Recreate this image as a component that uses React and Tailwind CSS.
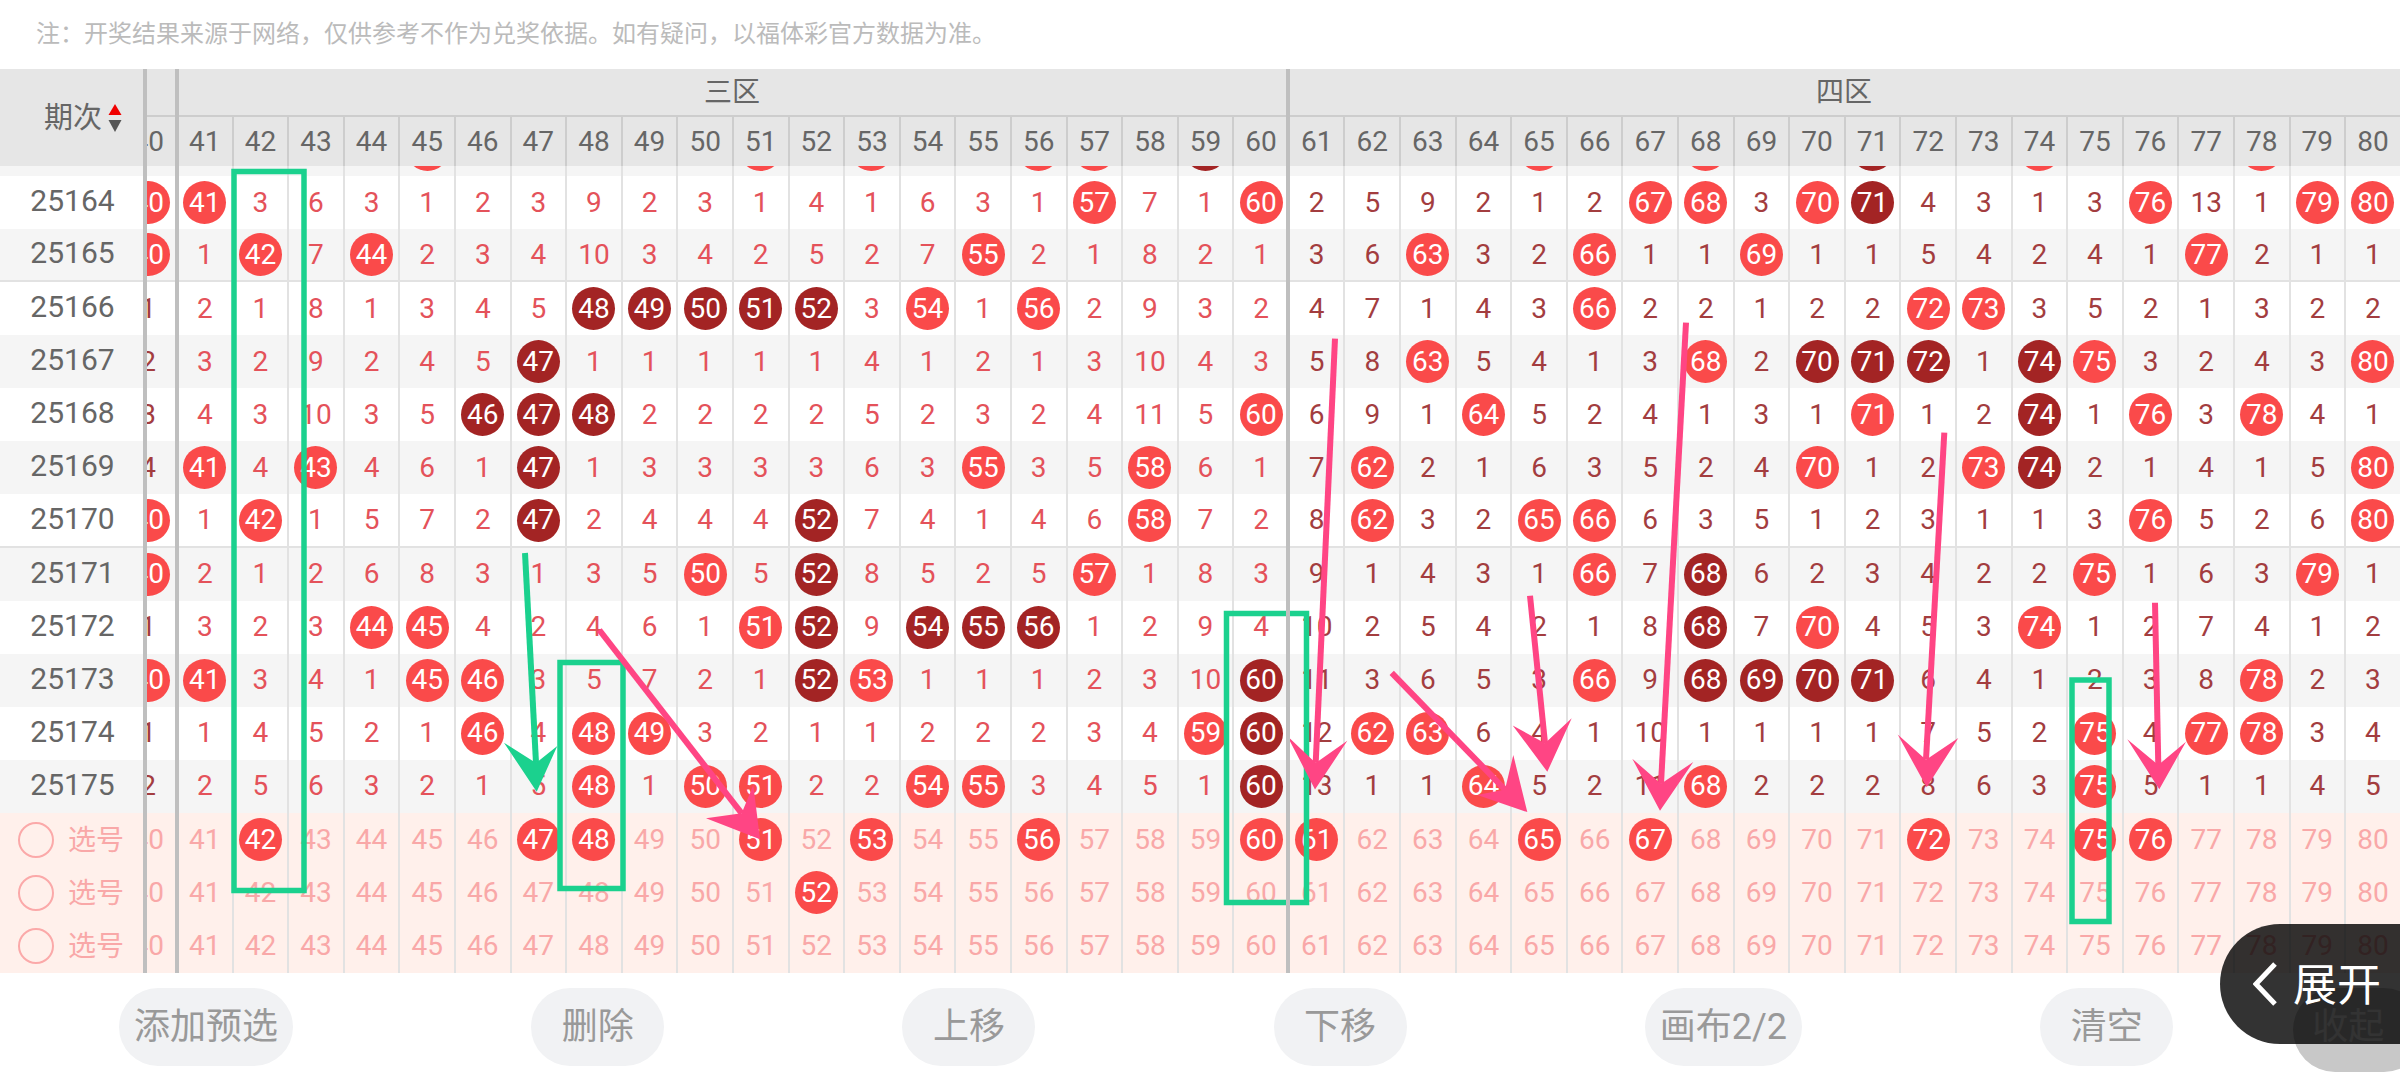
const ZONE3 = Array.from({ length: 20 }, (_, i) => 41 + i);
const ZONE4 = Array.from({ length: 20 }, (_, i) => 61 + i);
const COLS = [...ZONE3, ...ZONE4];

// one token per column 40..80: "." red ball, "*" dark ball, otherwise the miss count
const ROWS = [
  ['25163', '1 1 1 1 1 . 1 1 1 1 1 . 1 . 1 1 . . 1 * 1 1 1 1 1 . 1 1 . 1 1 * 1 1 . 1 1 1 . 1 1', false],
  ['25164', '. . 3 6 3 1 2 3 9 2 3 1 4 1 6 3 1 . 7 1 . 2 5 9 2 1 2 . . 3 . * 4 3 1 3 . 13 1 . .', false],
  ['25165', '. 1 . 7 . 2 3 4 10 3 4 2 5 2 7 . 2 1 8 2 1 3 6 . 3 2 . 1 1 . 1 1 5 4 2 4 1 . 2 1 1', true],
  ['25166', '1 2 1 8 1 3 4 5 * * * * * 3 . 1 . 2 9 3 2 4 7 1 4 3 . 2 2 1 2 2 . . 3 5 2 1 3 2 2', false],
  ['25167', '2 3 2 9 2 4 5 * 1 1 1 1 1 4 1 2 1 3 10 4 3 5 8 . 5 4 1 3 . 2 * * * 1 * . 3 2 4 3 .', false],
  ['25168', '3 4 3 10 3 5 * * * 2 2 2 2 5 2 3 2 4 11 5 . 6 9 1 . 5 2 4 1 3 1 . 1 2 * 1 . 3 . 4 1', false],
  ['25169', '4 . 4 . 4 6 1 * 1 3 3 3 3 6 3 . 3 5 . 6 1 7 . 2 1 6 3 5 2 4 . 1 2 . * 2 1 4 1 5 .', false],
  ['25170', '. 1 . 1 5 7 2 * 2 4 4 4 * 7 4 1 4 6 . 7 2 8 . 3 2 . . 6 3 5 1 2 3 1 1 3 . 5 2 6 .', true],
  ['25171', '. 2 1 2 6 8 3 1 3 5 . 5 * 8 5 2 5 . 1 8 3 9 1 4 3 1 . 7 * 6 2 3 4 2 2 . 1 6 3 . 1', false],
  ['25172', '1 3 2 3 . . 4 2 4 6 1 . * 9 * * * 1 2 9 4 10 2 5 4 2 1 8 * 7 . 4 5 3 . 1 2 7 4 1 2', false],
  ['25173', '. . 3 4 1 . . 3 5 7 2 1 * . 1 1 1 2 3 10 * 11 3 6 5 3 . 9 * * * * 6 4 1 2 3 8 . 2 3', false],
  ['25174', '1 1 4 5 2 1 . 4 . . 3 2 1 1 2 2 2 3 4 . * 12 . . 6 4 1 10 1 1 1 1 7 5 2 . 4 . . 3 4', false],
  ['25175', '2 2 5 6 3 2 1 5 . 1 . . 2 2 . . 3 4 5 1 * 13 1 1 . 5 2 11 . 2 2 2 8 6 3 . 5 1 1 4 5', false],
];

const PICKS = [[42, 47, 48, 51, 53, 56, 60, 61, 65, 67, 72, 75, 76], [52], []];
const BUTTONS = ['添加预选', '删除', '上移', '下移', '画布2/2', '清空'];

function Ball({ n, dark }) {
  return (
    <span className={`flex h-[43px] w-[43px] shrink-0 items-center justify-center rounded-full text-white ${dark ? 'bg-[#a32424]' : 'bg-[#fa4a4a]'}`}>
      {n}
    </span>
  );
}

function Mark({ token, col }) {
  if (token === '.') return <Ball n={col} />;
  if (token === '*') return <Ball n={col} dark />;
  return <span className={col > 40 && col <= 60 ? 'text-[#e4525a]' : 'text-[#a33d3f]'}>{token}</span>;
}

function Cell({ children }) {
  return (
    <div className="flex h-full w-[55.6px] shrink-0 items-center justify-center border-l-2 border-[#e2e2e2]">
      {children}
    </div>
  );
}

// column 40 is scrolled under the frozen side, only its right end shows
function ClippedCell({ children }) {
  return (
    <div className="flex h-full w-[31px] shrink-0 justify-end overflow-hidden">
      <div className="flex h-full w-[55.6px] shrink-0 items-center justify-center">{children}</div>
    </div>
  );
}

function HistoryRow({ issue, marks, line, index }) {
  const tokens = marks.split(' ');
  const stripe = index % 2 === 0 ? 'bg-[#f5f5f5]' : 'bg-white';
  return (
    <div className={`flex h-[53.08px] ${stripe} ${line ? 'border-b-2 border-[#e2e2e2]' : ''}`}>
      <div className="flex w-[145px] shrink-0 items-center justify-center pb-[3px] text-[30px] text-[#666]">{issue}</div>
      <ClippedCell>
        <Mark token={tokens[0]} col={40} />
      </ClippedCell>
      {COLS.map((col, i) => (
        <Cell key={col}>
          <Mark token={tokens[i + 1]} col={col} />
        </Cell>
      ))}
    </div>
  );
}

function PickRow({ picks }) {
  return (
    <div className="flex h-[53.33px] bg-[#fff0eb] text-[#f9a8a8]">
      <div className="flex w-[145px] shrink-0 items-center gap-[14px] pl-[18px]">
        <span className="h-[36px] w-[36px] rounded-full border-2 border-[#fba9a9]" />
        <span className="pt-[2px] text-[28px]">选号</span>
      </div>
      <ClippedCell>40</ClippedCell>
      {COLS.map((col) => (
        <Cell key={col}>{picks.includes(col) ? <Ball n={col} /> : col}</Cell>
      ))}
    </div>
  );
}

function Header() {
  return (
    <div className="flex h-[97px] bg-[#e6e6e6] text-[#666]">
      <div className="flex w-[145px] shrink-0 items-center gap-[6px] pl-[44px] pt-[1px]">
        <span className="text-[29px]">期次</span>
        <svg width="14" height="28" viewBox="0 0 14 28">
          <path d="M7 0 L13.5 11 L0.5 11 Z" fill="#f00000" />
          <path d="M0.5 16 L13.5 16 L7 28 Z" fill="#555" />
        </svg>
      </div>
      <div className="flex min-w-0 flex-1 flex-col">
        <div className="flex h-[48px] border-b-2 border-[#cdcdcd] pt-[1px]">
          <div className="w-[31px]" />
          <div className="flex w-[1112px] items-center justify-center text-[28px]">三区</div>
          <div className="flex w-[1112px] items-center justify-center text-[28px]">四区</div>
        </div>
        <div className="flex h-[49px]">
          <ClippedCell>40</ClippedCell>
          {COLS.map((col) => (
            <div key={col} className="flex h-full w-[55.6px] shrink-0 items-center justify-center border-l-2 border-[#cdcdcd]">
              {col}
            </div>
          ))}
        </div>
      </div>
    </div>
  );
}

function Arrow({ from, tip, wing1, notch, wing2, color }) {
  return (
    <g fill={color} stroke={color}>
      <line x1={from[0]} y1={from[1]} x2={notch[0]} y2={notch[1]} strokeWidth="6" />
      <polygon points={`${tip} ${wing1} ${notch} ${wing2}`} stroke="none" />
    </g>
  );
}

// hand drawn markup on top of the chart
function Markup() {
  const green = '#1bd18e';
  const pink = '#ff4584';
  return (
    <svg className="pointer-events-none absolute left-0 top-0" width="2400" height="1080" viewBox="0 0 2400 1080" fill="none">
      <rect x="234" y="171.500" width="70" height="719" stroke={green} strokeWidth="5.500" />
      <rect x="560" y="662.500" width="63" height="226" stroke={green} strokeWidth="5.500" />
      <rect x="1226.500" y="613.500" width="80" height="289" stroke={green} strokeWidth="5.500" />
      <rect x="2072" y="680" width="37" height="241.500" stroke={green} strokeWidth="5.500" />
      <Arrow color={green} from={[525, 553]} tip={[536.7, 791.7]} wing1={[504, 742.7]} notch={[536, 763]} wing2={[557.3, 746]} />
      <Arrow color={pink} from={[599.3, 630]} tip={[760, 839.3]} wing1={[706, 818.3]} notch={[741.7, 813.3]} wing2={[753.3, 785]} />
      <Arrow color={pink} from={[1335, 338.6]} tip={[1315, 789.6]} wing1={[1287.3, 736]} notch={[1315.7, 762.9]} wing2={[1347.3, 740.7]} />
      <Arrow color={pink} from={[1391.7, 672.9]} tip={[1527.3, 812.1]} wing1={[1477.3, 795]} notch={[1505, 789.6]} wing2={[1513.3, 755]} />
      <Arrow color={pink} from={[1530, 595.7]} tip={[1547.3, 771.8]} wing1={[1512.7, 725.4]} notch={[1545, 743.2]} wing2={[1571.7, 718.2]} />
      <Arrow color={pink} from={[1686, 322.7]} tip={[1660, 810.7]} wing1={[1632.3, 758.7]} notch={[1661, 783.8]} wing2={[1693.3, 762.1]} />
      <Arrow color={pink} from={[1944.3, 432.6]} tip={[1926.7, 787.3]} wing1={[1897.7, 734.6]} notch={[1926, 759.7]} wing2={[1958.3, 738]} />
      <Arrow color={pink} from={[2155, 602.7]} tip={[2159.3, 789.3]} wing1={[2127.3, 739.3]} notch={[2158.3, 765]} wing2={[2186, 741.7]} />
    </svg>
  );
}

export default function App() {
  return (
    <div className="relative h-[1080px] w-[2400px] overflow-hidden bg-white font-['Roboto','Noto_Sans_CJK_SC',sans-serif] text-[28px] leading-none">
      <div className="flex h-[69px] items-center pb-[2px] pl-[36px] text-[24px] text-[#bbb]">
        注：开奖结果来源于网络，仅供参考不作为兑奖依据。如有疑问，以福体彩官方数据为准。
      </div>

      <div className="relative">
        <div className="relative z-10">
          <Header />
        </div>
        <div className="h-[807px] overflow-hidden">
          <div className="-mt-[43.08px]">
            {ROWS.map(([issue, marks, line], i) => (
              <HistoryRow key={issue} issue={issue} marks={marks} line={line} index={i} />
            ))}
            {PICKS.map((picks, i) => (
              <PickRow key={i} picks={picks} />
            ))}
          </div>
        </div>
        {/* frozen column rules sit over header and rows */}
        <div className="absolute bottom-0 left-[143px] top-0 z-10 w-[4px] bg-[#bfbfbf]" />
        <div className="absolute bottom-0 left-[175px] top-0 z-10 w-[4px] bg-[#bfbfbf]" />
        <div className="absolute bottom-0 left-[1286px] top-0 z-10 w-[4px] bg-[#bfbfbf]" />
      </div>

      <div className="flex items-start gap-[238.200px] pl-[119px] pt-[15px]">
        {BUTTONS.map((label) => (
          <button key={label} className="flex h-[78px] min-w-[133px] shrink-0 items-center justify-center rounded-full bg-[#f1f2f4] px-[15px] text-[36px] text-[#999]">
            {label}
          </button>
        ))}
        <button className="-ml-[118.200px] flex h-[84px] w-[133px] shrink-0 items-center justify-start rounded-full bg-[#c8c8c8] pb-[6px] pl-[19px] text-[36px] text-white">
          收起
        </button>
      </div>

      <Markup />

      <div className="absolute right-0 top-[924px] flex h-[120px] w-[180px] items-center gap-[16px] rounded-l-[60px] bg-black/80 pl-[33px] text-[44px] text-white">
        <svg width="24" height="44" viewBox="0 0 24 44" fill="none" stroke="white" strokeWidth="5">
          <path d="M22 2 L3 22 L22 42" />
        </svg>
        <span className="pt-[4px]">展开</span>
      </div>
    </div>
  );
}
